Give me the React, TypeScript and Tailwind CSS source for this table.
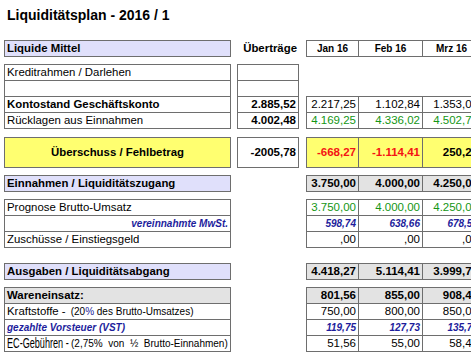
const LINE = "border-[#6e6e6e]";

type MonthRow = { cells: string[]; cls?: string; bg?: string; cellCls?: string[] };

const widths = ["w-[52px]", "w-[64px]", "w-[58px]"];

function Months({ rows, h = "h-[16px]", top = "" }: { rows: MonthRow[]; h?: string; top?: string }) {
	return (
		<div className={`ml-[7px] border-l border-t ${LINE} ${top}`}>
			{rows.map((r, i) => (
				<div key={i} className="flex">
					{r.cells.map((c, j) => (
						<div
							key={j}
							className={`${widths[j]} ${h} shrink-0 border-r border-b ${LINE} ${r.bg ?? "bg-white"} flex items-center justify-end pr-[2px] leading-none whitespace-nowrap overflow-hidden ${r.cls ?? "text-[11.5px]"} ${r.cellCls?.[j] ?? ""}`}
						>
							{c}
						</div>
					))}
				</div>
			))}
		</div>
	);
}

function LeftBox({ children, className = "" }: { children: React.ReactNode; className?: string }) {
	return <div className={`w-[227px] shrink-0 border-x border-t ${LINE} ${className}`}>{children}</div>;
}

function Row({ children, className = "" }: { children?: React.ReactNode; className?: string }) {
	return (
		<div className={`h-[16px] border-b ${LINE} flex items-center pl-[2px] pr-[2px] leading-none whitespace-nowrap overflow-hidden ${className}`}>
			{children}
		</div>
	);
}

const Spacer = () => <div className="w-[62px] ml-[6px] shrink-0" />;

export default function App() {
	return (
		<div className="w-[471px] h-[357px] overflow-hidden bg-white text-black font-['Liberation_Sans',Arial,sans-serif] text-[11.4px]">
			<div className="pt-[7px] pl-[7px] h-[23px]">
				<h1 className="text-[14px] font-bold leading-[16px]">Liquiditätsplan - 2016 / 1</h1>
			</div>

			{/* header */}
			<div className="flex pl-[4px] mt-[17px]">
				<LeftBox className="bg-[#e0e0fb]">
					<Row className="font-bold">Liquide Mittel</Row>
				</LeftBox>
				<div className="w-[62px] ml-[6px] h-[17px] shrink-0 flex items-center justify-end pr-[2px] font-bold leading-none">
					Überträge
				</div>
				<div className={`ml-[7px] border-l border-t ${LINE} flex`}>
					{["Jan 16", "Feb 16", "Mrz 16"].map((m, j) => (
						<div
							key={m}
							className={`${widths[j]} h-[16px] shrink-0 border-r border-b ${LINE} flex items-center justify-center text-[10px] font-bold leading-none`}
						>
							{m}
						</div>
					))}
				</div>
			</div>

			{/* Liquide Mittel block */}
			<div className="flex pl-[4px] mt-[7px]">
				<LeftBox>
					<Row>Kreditrahmen / Darlehen</Row>
					<Row />
					<Row className="font-bold">Kontostand Geschäftskonto</Row>
					<Row>Rücklagen aus Einnahmen</Row>
				</LeftBox>
				<div className={`w-[62px] ml-[6px] shrink-0 border-x border-t ${LINE}`}>
					<Row />
					<Row />
					<Row className="justify-end font-bold text-[11.5px]">2.885,52</Row>
					<Row className="justify-end font-bold text-[11.5px]">4.002,48</Row>
				</div>
				<Months
					top="mt-[32px] self-start"
					rows={[
						{ cells: ["2.217,25", "1.102,84", "1.353,02"] },
						{ cells: ["4.169,25", "4.336,02", "4.502,78"], cls: "text-[11.5px] text-[#149614]" },
					]}
				/>
			</div>

			{/* Überschuss */}
			<div className="flex pl-[4px] mt-[8px]">
				<LeftBox className="bg-[#ffff70]">
					<div className={`h-[30px] border-b ${LINE} flex items-center justify-center font-bold leading-none`}>
						Überschuss / Fehlbetrag
					</div>
				</LeftBox>
				<div className={`w-[62px] ml-[6px] h-[31px] shrink-0 border ${LINE} flex items-center justify-end pr-[2px] font-bold text-[11.5px] leading-none`}>
					-2005,78
				</div>
				<Months
					h="h-[30px]"
					rows={[
						{
							cells: ["-668,27", "-1.114,41", "250,27"],
							bg: "bg-[#ffff70]",
							cls: "text-[11.5px] font-bold",
							cellCls: ["text-[#f41414]", "text-[#f41414]", "text-black"],
						},
					]}
				/>
			</div>

			{/* Einnahmen header */}
			<div className="flex pl-[4px] mt-[7px]">
				<LeftBox className="bg-[#e0e0fb]">
					<Row className="font-bold">Einnahmen / Liquiditätszugang</Row>
				</LeftBox>
				<Spacer />
				<Months rows={[{ cells: ["3.750,00", "4.000,00", "4.250,00"], bg: "bg-[#e3e3e3]", cls: "text-[11.5px] font-bold" }]} />
			</div>

			{/* Einnahmen block */}
			<div className="flex pl-[4px] mt-[7px]">
				<LeftBox>
					<Row>Prognose Brutto-Umsatz</Row>
					<Row className="justify-end text-[10px] font-bold italic text-[#1d1d9c]">vereinnahmte MwSt.</Row>
					<Row>Zuschüsse / Einstiegsgeld</Row>
				</LeftBox>
				<Spacer />
				<Months
					rows={[
						{ cells: ["3.750,00", "4.000,00", "4.250,00"], cls: "text-[11.5px] text-[#149614]" },
						{ cells: ["598,74", "638,66", "678,58"], cls: "text-[10px] font-bold italic text-[#1d1d9c]" },
						{ cells: [",00", ",00", ",00"] },
					]}
				/>
			</div>

			{/* Ausgaben header */}
			<div className="flex pl-[4px] mt-[15px]">
				<LeftBox className="bg-[#e0e0fb]">
					<Row className="font-bold">Ausgaben / Liquiditätsabgang</Row>
				</LeftBox>
				<Spacer />
				<Months rows={[{ cells: ["4.418,27", "5.114,41", "3.999,78"], bg: "bg-[#e3e3e3]", cls: "text-[11.5px] font-bold" }]} />
			</div>

			{/* Ausgaben block */}
			<div className="flex pl-[4px] mt-[7px]">
				<LeftBox>
					<Row className="font-bold bg-[#e3e3e3]">Wareneinsatz:</Row>
					<Row>
						<span>Kraftstoffe -</span>
						<span className="ml-[5px] text-[10px]">
							(20<span className="text-[#1d1d9c]">%</span> des Brutto-Umsatzes)
						</span>
					</Row>
					<Row className="text-[10px] font-bold italic text-[#1d1d9c]">gezahlte Vorsteuer (VST)</Row>
					<Row>
						<span className="inline-block w-[62px] shrink-0">
							<span className="inline-block text-[14px] scale-x-[0.65] origin-left">EC-Gebühren -</span>
						</span>
						<span className="ml-[2px] text-[10px] whitespace-pre">(2,75%  von  ½  Brutto-Einnahmen)</span>
					</Row>
				</LeftBox>
				<Spacer />
				<Months
					rows={[
						{ cells: ["801,56", "855,00", "908,44"], bg: "bg-[#e3e3e3]", cls: "text-[11.5px] font-bold" },
						{ cells: ["750,00", "800,00", "850,00"] },
						{ cells: ["119,75", "127,73", "135,71"], cls: "text-[10px] font-bold italic text-[#1d1d9c]" },
						{ cells: ["51,56", "55,00", "58,44"] },
					]}
				/>
			</div>
		</div>
	);
}
